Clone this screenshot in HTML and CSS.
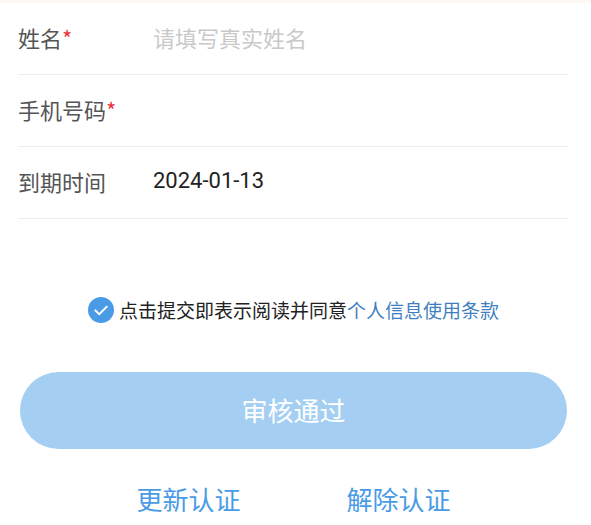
FILE: index.html
```html
<!DOCTYPE html>
<html lang="zh">
<head>
<meta charset="utf-8">
<link rel="stylesheet" href="styles.css">
</head>
<body>
<div class="topbar"></div>
<div class="form">
  <div class="row">
    <div class="label">姓名<span class="req">*</span></div>
    <div class="value placeholder">请填写真实姓名</div>
  </div>
  <div class="row">
    <div class="label">手机号码<span class="req">*</span></div>
    <div class="value"></div>
  </div>
  <div class="row">
    <div class="label">到期时间</div>
    <div class="value date">2024-01-13</div>
  </div>
</div>
<div class="agree">
  <svg class="check" width="26" height="26" viewBox="0 0 26 26">
    <circle cx="13" cy="13" r="13" fill="#4a9be6"/>
    <path d="M7.3 13.4 L11.2 17.2 L18.8 9.6" fill="none" stroke="#fff" stroke-width="2" stroke-linecap="round" stroke-linejoin="round"/>
  </svg>
  <span class="agree-text">点击提交即表示阅读并同意<span class="link">个人信息使用条款</span></span>
</div>
<div class="btn-wrap">
  <div class="btn">审核通过</div>
</div>
<div class="actions">
  <span class="action">更新认证</span>
  <span class="action">解除认证</span>
</div>
</body>
</html>
```
FILE: styles.css
```css
html, body {
  margin: 0;
  padding: 0;
  background: #fff;
  font-family: "Noto Sans CJK SC", "Noto Sans", sans-serif;
}
.topbar {
  height: 3px;
  background: #fdf8f0;
}
.form {
  padding: 0 22px 0 18px;
}
.row {
  display: flex;
  align-items: center;
  height: 68px;
  padding-bottom: 3px;
  border-bottom: 1px solid #ececec;
}
.label {
  width: 135px;
  font-size: 22px;
  color: #555;
  line-height: 1;
}
.req {
  color: #e8333f;
  font-size: 22px;
}
.value {
  font-size: 22px;
  line-height: 1;
  color: #222;
}
.placeholder {
  color: #c9c9c9;
}
.date {
  font-family: Roboto, "Noto Sans", sans-serif;
  font-size: 22px;
  color: #222;
}
.agree {
  display: flex;
  align-items: center;
  justify-content: center;
  margin-top: 78px;
  height: 26px;
  padding-right: 4px;
}
.check {
  display: block;
  margin-right: 5px;
}
.agree-text {
  font-size: 19px;
  color: #222;
  line-height: 1;
  padding-bottom: 2px;
}
.link {
  color: #3f7fc0;
}
.btn-wrap {
  padding: 0 24px 0 20px;
  margin-top: 49px;
}
.btn {
  height: 74px;
  padding-bottom: 3px;
  border-radius: 39px;
  background: #a5cff2;
  color: #fff;
  font-size: 26px;
  display: flex;
  align-items: center;
  justify-content: center;
}
.actions {
  display: flex;
  justify-content: center;
  gap: 106px;
  margin-top: 37px;
  padding-right: 4px;
}
.action {
  font-size: 26px;
  color: #4a9be6;
  line-height: 1;
}
```
